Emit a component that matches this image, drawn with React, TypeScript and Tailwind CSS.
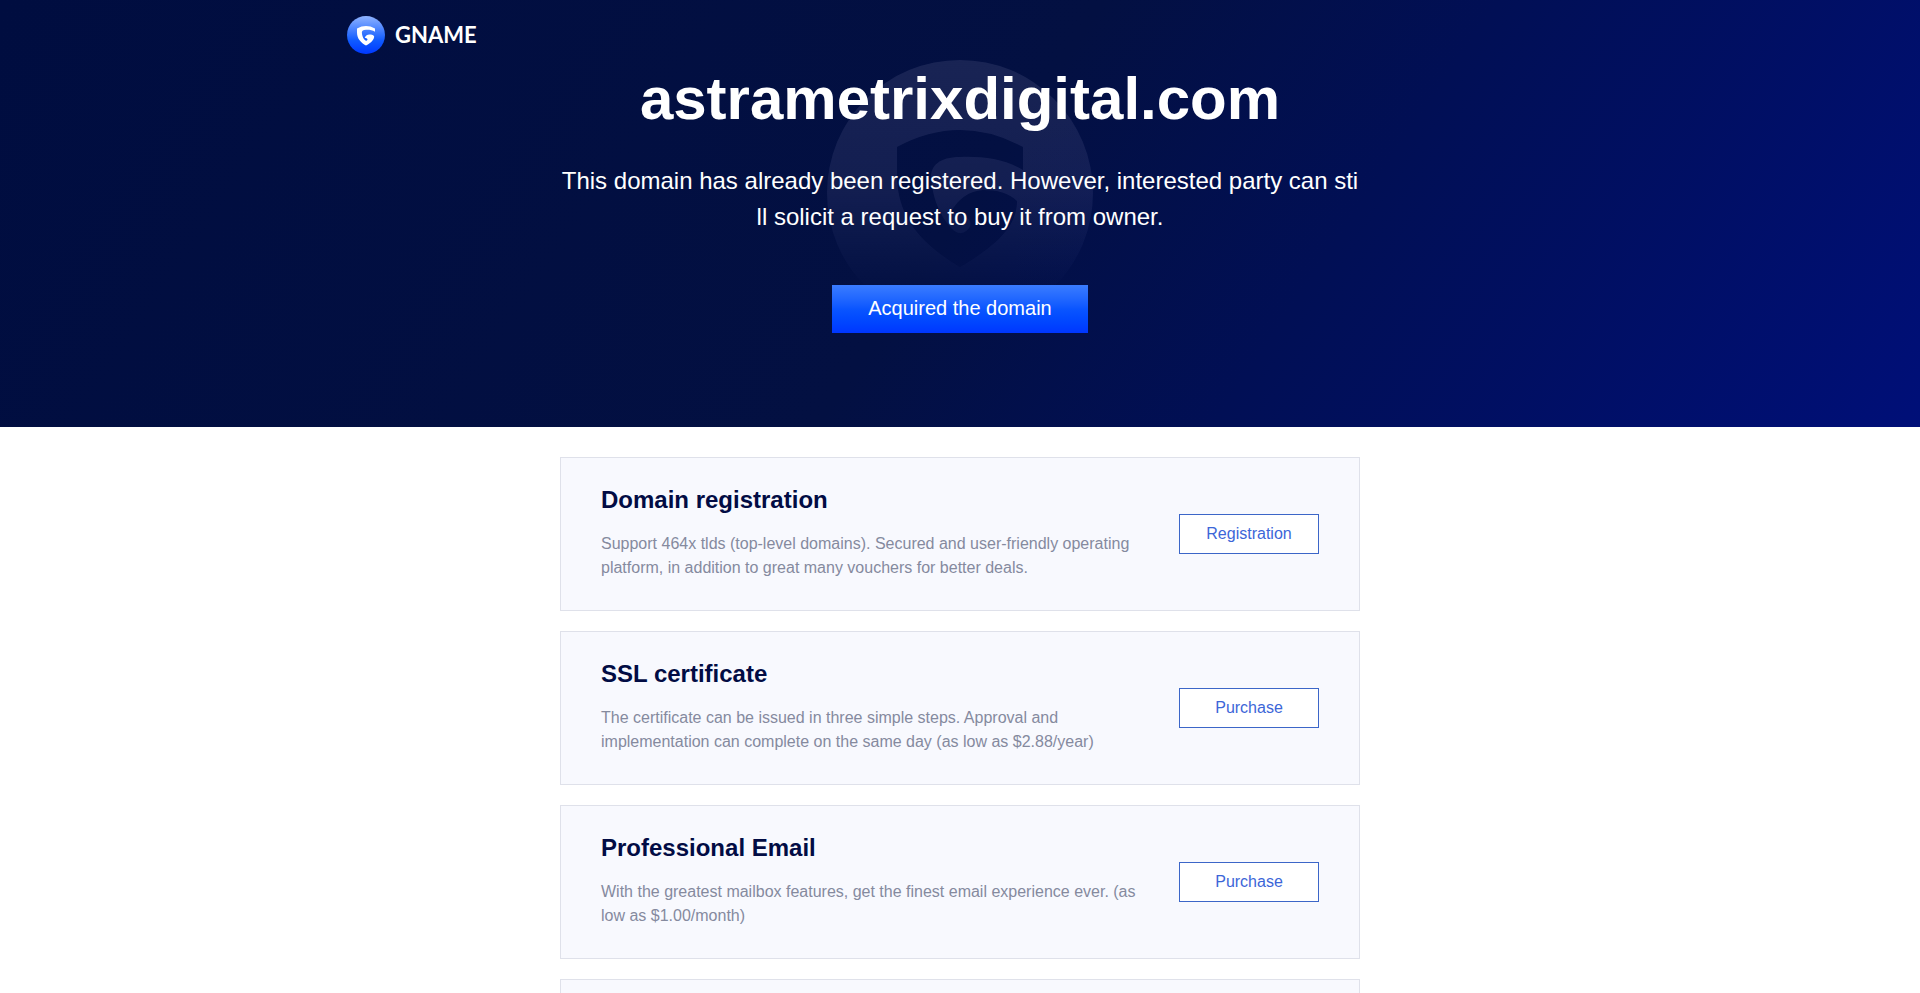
const services = [
  {
    title: "Domain registration",
    text: "Support 464x tlds (top-level domains). Secured and user-friendly operating platform, in addition to great many vouchers for better deals.",
    action: "Registration",
  },
  {
    title: "SSL certificate",
    text: "The certificate can be issued in three simple steps. Approval and implementation can complete on the same day (as low as $2.88/year)",
    action: "Purchase",
  },
  {
    title: "Professional Email",
    text: "With the greatest mailbox features, get the finest email experience ever. (as low as $1.00/month)",
    action: "Purchase",
  },
];

const SHIELD =
  "M70 87Q133 53 196 87V110C178 99 155 96 133 97C112 97 104 106 104 117C105 134 111 152 120 163C125 170 130 174 135 173C141 171 145 166 143 161C141 157 134 154 124 152C132 138 142 131 156 130C170 130 182 133 190 141C190 165 172 184 133 207C98 186 70 160 70 115Z";

function Badge() {
  return (
    <svg viewBox="0 0 266 266" className="size-[38px]" aria-hidden="true">
      <defs>
        <linearGradient id="badge" x1="0" y1="0" x2="0" y2="1">
          <stop offset="0" stopColor="#8fb3ff" />
          <stop offset="0.65" stopColor="#0f5aff" />
          <stop offset="1" stopColor="#0038ff" />
        </linearGradient>
      </defs>
      <circle cx="133" cy="133" r="133" fill="url(#badge)" />
      <path d={SHIELD} fill="#fff" />
    </svg>
  );
}

function Watermark() {
  return (
    <svg
      viewBox="0 0 266 266"
      className="pointer-events-none absolute top-[60px] left-1/2 size-[266px] -translate-x-1/2"
      aria-hidden="true"
    >
      <defs>
        <linearGradient id="fade" x1="0" y1="0" x2="0" y2="1">
          <stop offset="0" stopColor="#e6dcff" stopOpacity="0.1" />
          <stop offset="0.5" stopColor="#d0c8ff" stopOpacity="0.08" />
          <stop offset="0.9" stopColor="#a0a0ff" stopOpacity="0" />
        </linearGradient>
        <mask id="cut">
          <rect width="266" height="266" fill="#fff" />
          <path d={SHIELD} fill="#000" />
        </mask>
      </defs>
      <circle cx="133" cy="133" r="133" fill="url(#fade)" mask="url(#cut)" />
    </svg>
  );
}

export default function App() {
  return (
    <div className="bg-white font-['Liberation_Sans',Arial,sans-serif]">
      <div className="relative bg-[linear-gradient(124deg,#000d40_0%,#031042_50%,#010f55_68%,#000f78_100%)] pb-[94px] text-white">
        <Watermark />
        <header className="relative mx-auto flex max-w-[1226px] pt-4">
          <a href="#" className="flex items-center gap-[10px] font-['Lato',sans-serif] text-[22px] leading-[38px] font-bold">
            <Badge />
            GNAME
          </a>
        </header>
        <main className="relative mx-auto flex max-w-[800px] flex-col items-center text-center">
          <h1 className="mt-[9px] text-6xl leading-[72px] font-bold">astrametrixdigital.com</h1>
          <p className="mt-7 text-2xl leading-9 break-all">
            This domain has already been registered. However, interested party can still solicit a request to buy it from owner.
          </p>
          <button
            type="button"
            className="mt-[50px] h-12 w-64 bg-linear-to-b from-[#3a7cff] via-[#0a55ff] to-[#0036ff] pb-0.5 text-xl"
          >
            Acquired the domain
          </button>
        </main>
      </div>
      <section className="mx-auto flex max-w-[800px] flex-col gap-5 py-[30px]">
        {services.map((s) => (
          <article
            key={s.title}
            className="flex items-center gap-10 border border-[#dfe1ea] bg-[#f8f9fe] px-10 pt-6 pb-[30px]"
          >
            <div className="flex-1">
              <h2 className="text-2xl leading-9 font-bold text-[#020c44]">{s.title}</h2>
              <p className="mt-[14px] text-base leading-6 text-[#858a9e]">{s.text}</p>
            </div>
            <button
              type="button"
              className="mt-[6px] h-10 w-[140px] border border-[#3c66c8] bg-white text-base text-[#3c66d8]"
            >
              {s.action}
            </button>
          </article>
        ))}
        <article className="min-h-[154px] border border-[#dfe1ea] bg-[#f8f9fe]" />
      </section>
    </div>
  );
}
